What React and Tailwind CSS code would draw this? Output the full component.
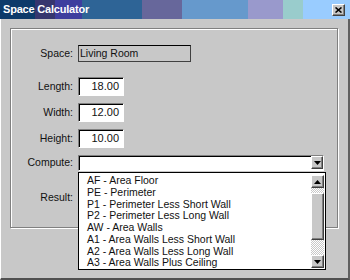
import React from "react";

const items = [
  "AF - Area Floor",
  "PE - Perimeter",
  "P1 - Perimeter Less Short Wall",
  "P2 - Perimeter Less Long Wall",
  "AW - Area Walls",
  "A1 - Area Walls Less Short Wall",
  "A2 - Area Walls Less Long Wall",
  "A3 - Area Walls Plus Ceiling",
];

const sunken =
  "border-t border-l border-[#808080] border-b-white border-r-white border-b border-r shadow-[inset_1px_1px_0_#000]";
const raised =
  "bg-[#c8c8c8] border-t border-l border-white border-b border-r border-b-[#404040] border-r-[#404040] shadow-[inset_-1px_-1px_0_#808080]";

const Arrow = ({ up }) => (
  <svg width="7" height="4" viewBox="0 0 7 4">
    <path d={up ? "M0 4h7L3.5 0z" : "M0 0h7L3.5 4z"} fill="#000" />
  </svg>
);

const NumField = ({ value }) => (
  <div className={`w-[46px] h-[19px] bg-white ${sunken} flex items-center justify-end pr-[4px] text-[11px] text-[#111]`}>
    {value}
  </div>
);

const Row = ({ label, children, className = "" }) => (
  <div className={`flex items-center ${className}`}>
    <div className="w-[62px] text-right text-[10.5px] text-[#111]">{label}</div>
    <div className="ml-[5px]">{children}</div>
  </div>
);

export default function App() {
  return (
    <div className="w-[350px] h-[280px] bg-[#c8c8c8] relative overflow-hidden font-['Liberation_Sans',Arial,sans-serif]">
      <div className="h-[19px] flex items-center justify-between pl-[3px] pr-[5px] bg-[linear-gradient(to_right,#0c3a6a_0_35px,#36366e_35px_55px,#3e3e9e_55px_82px,#2e6496_82px_142px,#67679b_142px_182px,#6699cc_182px_248px,#9999cc_248px_283px,#99cccc_283px_303px,#99ccff_303px)]">
        <span className="text-white font-bold text-[11px] leading-none tracking-[-0.2px]">Space Calculator</span>
        <div className={`w-[13px] h-[12px] ${raised} flex items-center justify-center mt-[1px]`}>
          <svg width="7" height="6" viewBox="0 0 7 6">
            <path d="M0.5 0.5L6.5 5.5M6.5 0.5L0.5 5.5" stroke="#000" strokeWidth="1.6" />
          </svg>
        </div>
      </div>
      <div className="h-[261px] border-l border-l-white border-r-2 border-r-[#606060] border-b-2 border-b-[#505050] pl-[9px] pt-[9px]">
        <div className="w-[328px] h-[200px] border border-[#808080] shadow-[inset_1px_1px_0_#fff,1px_1px_0_#fff] pt-[16px]">
          <Row label="Space:">
            <div className="w-[113px] h-[17px] border border-[#404040] border-t-[#000] flex items-center pl-[1px] text-[10.5px] text-[#111]">
              Living Room
            </div>
          </Row>
          <Row label="Length:" className="mt-[15px]">
            <NumField value="18.00" />
          </Row>
          <Row label="Width:" className="mt-[7px]">
            <NumField value="12.00" />
          </Row>
          <Row label="Height:" className="mt-[7px]">
            <NumField value="10.00" />
          </Row>
          <Row label="Compute:" className="mt-[7px]">
            <div className={`w-[246px] h-[16px] bg-white ${sunken} flex justify-end items-start`}>
              <div className={`w-[12px] h-[13px] ${raised} flex items-center justify-center`}>
                <Arrow />
              </div>
            </div>
          </Row>
          <Row label="Result:" className="mt-[18px]">
            <div className="h-[17px]" />
          </Row>
        </div>
      </div>
      <div className="absolute left-[78px] top-[172px] w-[248px] h-[98px] bg-white border border-black flex">
        <div className="flex-1 pl-[8px] pt-[2px]">
          {items.map((t) => (
            <div key={t} className="h-[11.75px] leading-[11.75px] text-[10.5px] text-[#111] whitespace-nowrap">
              {t}
            </div>
          ))}
        </div>
        <div className="w-[13px] mr-[1px] mt-[2px] mb-[1px] flex flex-col">
          <div className={`h-[13px] ${raised} flex items-center justify-center`}>
            <Arrow up />
          </div>
          <div className="h-[5px] bg-[repeating-conic-gradient(#fff_0_25%,#c8c8c8_0_50%)] bg-[length:2px_2px]" />
          <div className={`h-[47px] ${raised}`} />
          <div className="flex-1 bg-[repeating-conic-gradient(#fff_0_25%,#c8c8c8_0_50%)] bg-[length:2px_2px]" />
          <div className={`h-[13px] ${raised} flex items-center justify-center`}>
            <Arrow />
          </div>
        </div>
      </div>
    </div>
  );
}
